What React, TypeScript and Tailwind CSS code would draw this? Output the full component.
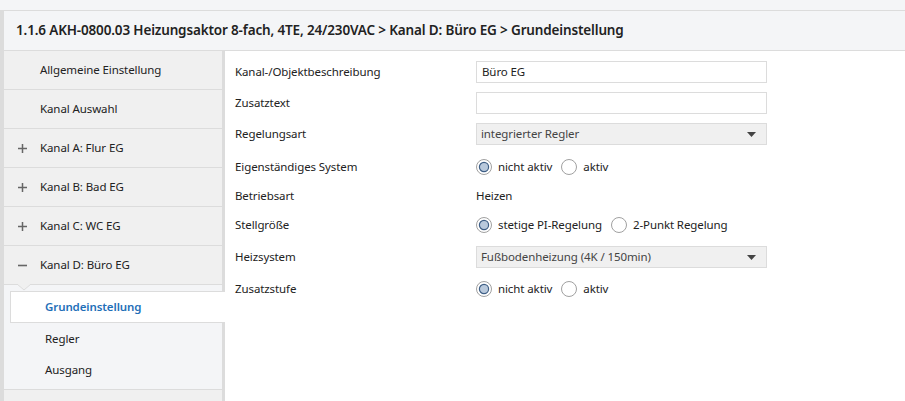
import React from "react";

const font = { fontFamily: '"Segoe UI", "Noto Sans", "Open Sans", sans-serif' };

function Radio({ checked }: { checked?: boolean }) {
  return (
    <svg width="16" height="16" viewBox="0 0 16 16" className="shrink-0">
      <circle cx="8" cy="8" r="7.5" fill="#ffffff" stroke="#a0a0a0" strokeWidth="1" />
      {checked && <circle cx="8" cy="8" r="4.6" fill="#b9c9dc" stroke="#3f5f86" strokeWidth="1.2" />}
    </svg>
  );
}

function RadioGroup({ options, checked }: { options: string[]; checked: number }) {
  return (
    <div className="flex items-center gap-[6px] text-[11.5px] tracking-[-0.1px] text-[#222]">
      {options.map((o, i) => (
        <div key={o} className="flex items-center gap-[6px] mr-[3px]">
          <Radio checked={i === checked} />
          <span>{o}</span>
        </div>
      ))}
    </div>
  );
}

function Select({ value }: { value: string }) {
  return (
    <div className="w-[291px] h-[22px] bg-[#f0f0f0] border border-[#dcdcdc] flex items-center justify-between pl-[4px] pr-[10px] text-[11.5px] tracking-[-0.1px] text-[#444]">
      <span>{value}</span>
      <svg width="9" height="5" viewBox="0 0 9 5">
        <path d="M0 0 H9 L4.5 5 Z" fill="#444" />
      </svg>
    </div>
  );
}

function Input({ value }: { value?: string }) {
  return (
    <div className="w-[291px] h-[22px] bg-white border border-[#dcdcdc] flex items-center pl-[5px] text-[11.5px] tracking-[-0.1px] text-[#222]">
      {value}
    </div>
  );
}

function Row({ label, children, mt }: { label: string; children: React.ReactNode; mt: string }) {
  return (
    <div className={`flex items-center h-[22px] ${mt}`}>
      <div className="w-[241px] text-[11.5px] tracking-[-0.1px] text-[#222]">{label}</div>
      {children}
    </div>
  );
}

function NavItem({ label, sign }: { label: string; sign?: "+" | "-" }) {
  return (
    <div className="h-[39px] border-b border-[#dcdcdc] flex items-center text-[11.5px] tracking-[-0.1px] text-[#222] relative">
      <div className="w-[36px] flex justify-center text-[#666]">
        {sign === "+" && (
          <svg width="9" height="9" viewBox="0 0 9 9">
            <path d="M4.5 0 V9 M0 4.5 H9" stroke="#666" strokeWidth="1.5" />
          </svg>
        )}
        {sign === "-" && (
          <svg width="9" height="9" viewBox="0 0 9 9">
            <path d="M0 4.5 H9" stroke="#666" strokeWidth="1.6" />
          </svg>
        )}
      </div>
      <span>{label}</span>
    </div>
  );
}

export default function App() {
  return (
    <div className="w-[905px] h-[401px] overflow-hidden bg-[#f4f5f7]" style={font}>
      <div className="h-[11px] border-b border-[#dcdcdc] bg-[#f4f5f7]" />
      <div className="border-l-[4px] border-[#dcdcdc]">
        <div className="h-[40px] border-b border-[#dcdcdc] flex items-center pl-[12px] text-[13.5px] tracking-[-0.15px] font-semibold text-[#222]">
          1.1.6 AKH-0800.03 Heizungsaktor 8-fach, 4TE, 24/230VAC &gt; Kanal D: Büro EG &gt; Grundeinstellung
        </div>
        <div className="flex h-[360px]">
          <div className="w-[221px] shrink-0 bg-[#f0f0f0] border-r-[3px] border-[#dcdcdc] relative">
            <NavItem label="Allgemeine Einstellung" />
            <NavItem label="Kanal Auswahl" />
            <NavItem label="Kanal A: Flur EG" sign="+" />
            <NavItem label="Kanal B: Bad EG" sign="+" />
            <NavItem label="Kanal C: WC EG" sign="+" />
            <NavItem label="Kanal D: Büro EG" sign="-" />
            <div className="bg-[#f4f5f7] border-b border-[#dcdcdc] pt-[6px] pb-[4px] relative">
              <svg width="14" height="7" viewBox="0 0 14 7" className="absolute left-[13px] -top-[1px]">
                <path d="M0 0 L7 6 L14 0" fill="#f0f0f0" stroke="#dcdcdc" strokeWidth="1" />
              </svg>
              <div className="ml-[6px] -mr-[3px] h-[32px] bg-white border border-r-0 border-[#dcdcdc] flex items-center pl-[34px] text-[11.5px] tracking-[-0.1px] font-semibold text-[#1f6fb8] relative z-10">
                Grundeinstellung
              </div>
              <div className="h-[31px] flex items-center pl-[41px] text-[11.5px] tracking-[-0.1px] text-[#222]">Regler</div>
              <div className="h-[31px] flex items-center pl-[41px] text-[11.5px] tracking-[-0.1px] text-[#222]">Ausgang</div>
            </div>
          </div>
          <div className="flex-1 bg-white pl-[10px] pt-[10px]">
            <Row label="Kanal-/Objektbeschreibung" mt="mt-0">
              <Input value="Büro EG" />
            </Row>
            <Row label="Zusatztext" mt="mt-[9px]">
              <Input />
            </Row>
            <Row label="Regelungsart" mt="mt-[9px]">
              <Select value="integrierter Regler" />
            </Row>
            <Row label="Eigenständiges System" mt="mt-[11px]">
              <RadioGroup options={["nicht aktiv", "aktiv"]} checked={0} />
            </Row>
            <Row label="Betriebsart" mt="mt-[7px]">
              <span className="text-[11.5px] tracking-[-0.1px] text-[#222]">Heizen</span>
            </Row>
            <Row label="Stellgröße" mt="mt-[7px]">
              <RadioGroup options={["stetige PI-Regelung", "2-Punkt Regelung"]} checked={0} />
            </Row>
            <Row label="Heizsystem" mt="mt-[10px]">
              <Select value="Fußbodenheizung (4K / 150min)" />
            </Row>
            <Row label="Zusatzstufe" mt="mt-[10px]">
              <RadioGroup options={["nicht aktiv", "aktiv"]} checked={0} />
            </Row>
          </div>
        </div>
      </div>
    </div>
  );
}
